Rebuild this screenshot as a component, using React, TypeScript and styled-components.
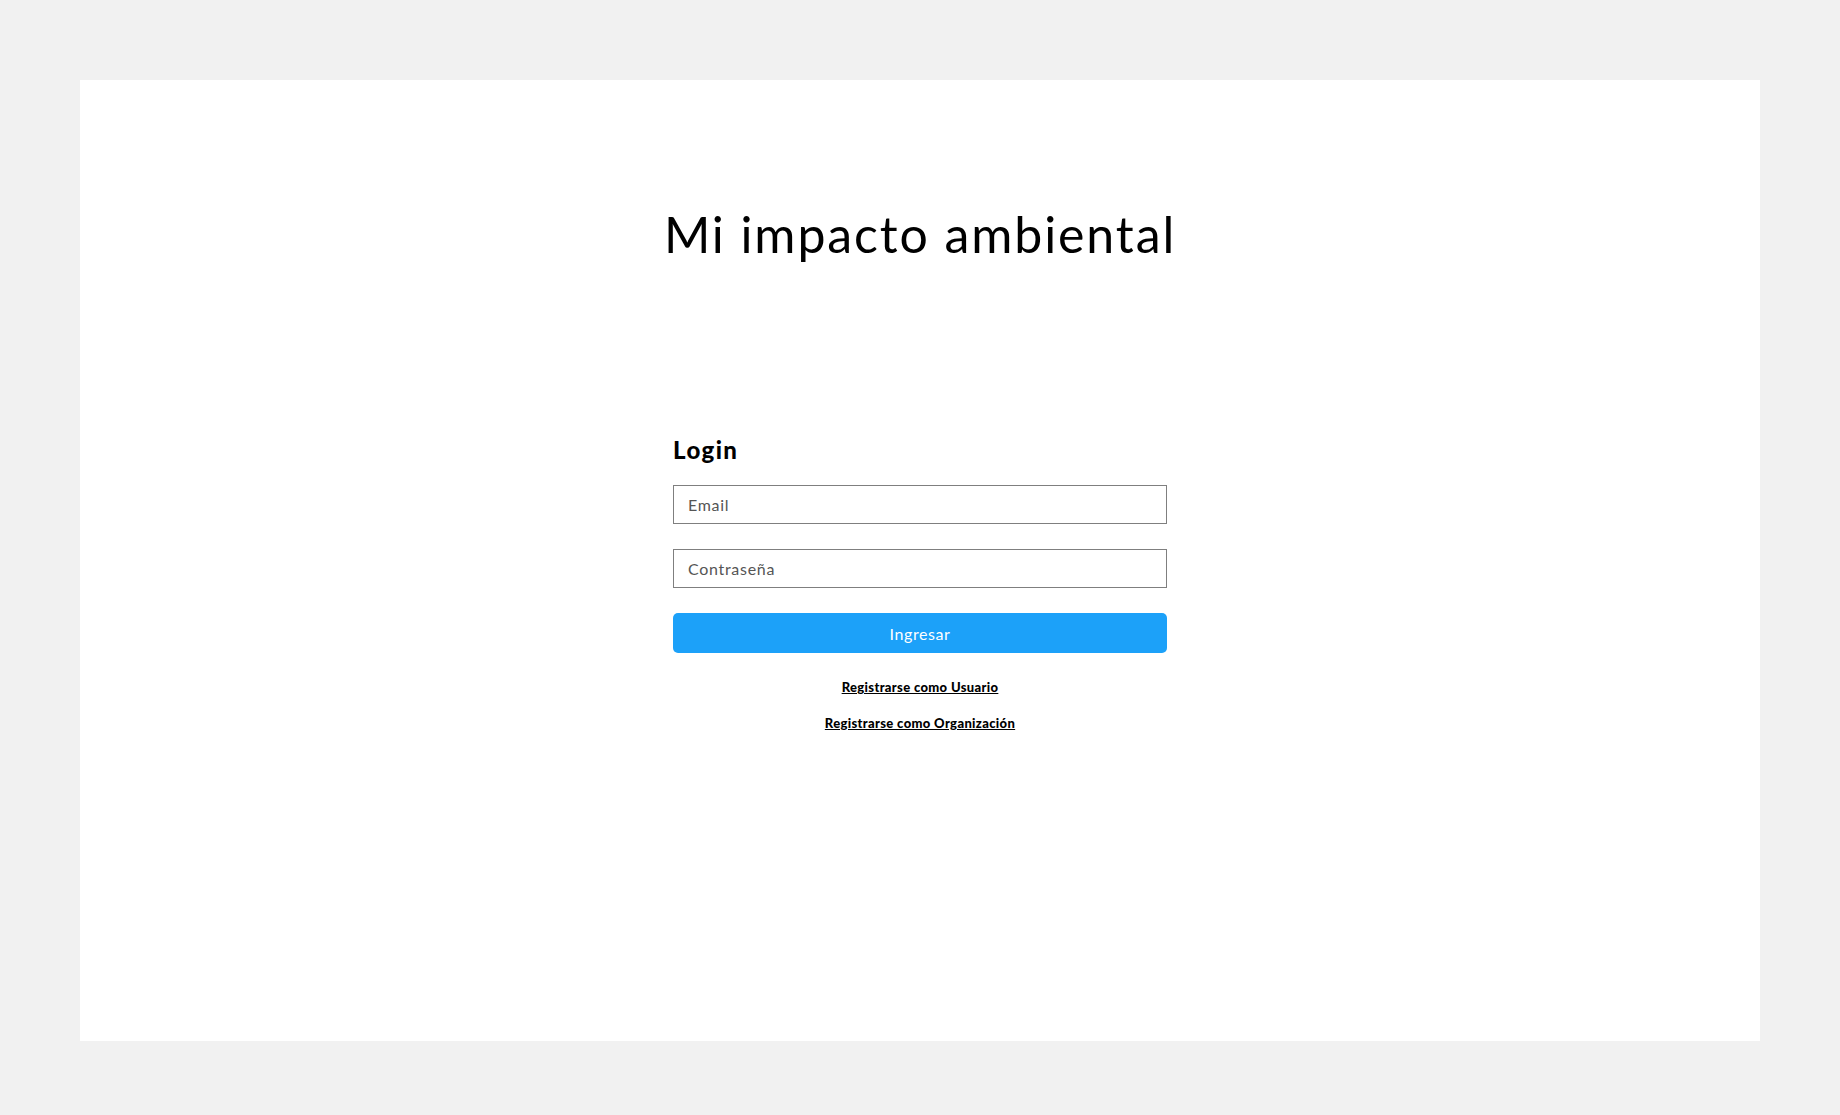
import React from "react";
import styled, { createGlobalStyle } from "styled-components";

const GlobalStyle = createGlobalStyle`
  html, body {
    margin: 0;
    padding: 0;
    background: #f1f1f1;
  }
  body {
    font-family: "Lato", "Open Sans", "DejaVu Sans", sans-serif;
    color: #000;
  }
  * { box-sizing: border-box; }
`;

const Page = styled.div`
  padding: 80px 80px 74px;
`;

const Card = styled.main`
  background: #ffffff;
  height: 961px;
  display: flex;
  flex-direction: column;
  align-items: center;
  padding-top: 124px;
`;

const Title = styled.h1`
  margin: 0;
  font-family: "Lato", sans-serif;
  font-weight: 400;
  font-size: 50px;
  line-height: 60px;
  letter-spacing: 1.9px;
  color: #000;
`;

const Form = styled.form`
  width: 494px;
  margin-top: 171px;
  display: flex;
  flex-direction: column;
`;

const Heading = styled.h2`
  margin: 0 0 20px;
  font-family: "Lato", sans-serif;
  font-weight: 900;
  font-size: 24px;
  line-height: 30px;
  letter-spacing: 1.4px;
`;

const Input = styled.input`
  width: 100%;
  height: 39px;
  margin-bottom: 25px;
  padding: 0 14px;
  border: 1px solid #7f7f7f;
  border-radius: 0;
  font-family: "Lato", sans-serif;
  font-size: 16px;
  letter-spacing: 0.7px;
  color: #222;
  outline: none;
  &::placeholder {
    color: #555555;
  }
`;

const Button = styled.button`
  width: 100%;
  height: 40px;
  border: none;
  border-radius: 5px;
  background: #1ca1f9;
  color: #fff;
  font-family: "Lato", sans-serif;
  font-size: 16px;
  letter-spacing: 0.6px;
  cursor: pointer;
`;

const Links = styled.div`
  margin-top: 26px;
  display: flex;
  flex-direction: column;
  align-items: center;
  gap: 19px;
`;

const RegisterLink = styled.a`
  font-family: "Lato", sans-serif;
  font-weight: 900;
  font-size: 13px;
  line-height: 17px;
  letter-spacing: 0.35px;
  color: #000;
  text-decoration: underline;
  cursor: pointer;
`;

export default function App() {
  return (
    <>
      <GlobalStyle />
      <Page>
        <Card>
          <Title>Mi impacto ambiental</Title>
          <Form onSubmit={(e) => e.preventDefault()}>
            <Heading>Login</Heading>
            <Input type="email" placeholder="Email" />
            <Input type="password" placeholder="Contraseña" />
            <Button type="submit">Ingresar</Button>
            <Links>
              <RegisterLink>Registrarse como Usuario</RegisterLink>
              <RegisterLink>Registrarse como Organización</RegisterLink>
            </Links>
          </Form>
        </Card>
      </Page>
    </>
  );
}
